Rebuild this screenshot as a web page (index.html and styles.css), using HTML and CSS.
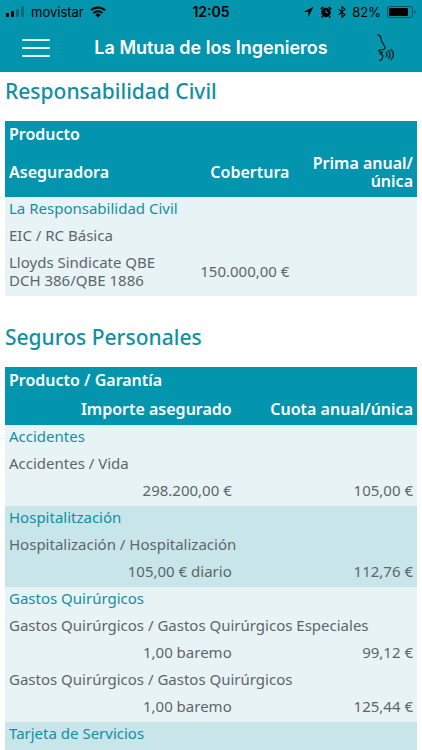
FILE: index.html
```html
<!DOCTYPE html>
<html lang="es">
<head>
<meta charset="utf-8">
<meta name="viewport" content="width=device-width, initial-scale=1">
<title>La Mutua de los Ingenieros</title>
<link rel="stylesheet" href="styles.css">
</head>
<body>
<header class="top">
  <div class="status">
    <div class="status-left">
      <svg width="19" height="12" viewBox="0 0 19 12"><rect x="0" y="7" width="3" height="4" rx="1"/><rect x="5" y="5" width="3" height="6" rx="1"/><rect x="10" y="3" width="3" height="8" rx="1" opacity=".3"/><rect x="15" y="0" width="3" height="11" rx="1" opacity=".3"/></svg>
      <span class="carrier">movistar</span>
      <svg class="wifi" width="16" height="12" viewBox="0 0 16 12"><g fill="none" stroke="#000" stroke-width="2"><path d="M1 4.3a10 10 0 0 1 14 0"/><path d="M3.5 7.1a6.4 6.4 0 0 1 9 0"/></g><path d="M5.4 8.9a3.7 3.7 0 0 1 5.2 0L8 11.6z"/></svg>
    </div>
    <time class="clock">12:05</time>
    <div class="status-right">
      <svg width="11" height="12" viewBox="0 0 11 12"><path d="M10.5.8.5 6h4.8v5.2z"/></svg>
      <svg width="12" height="12" viewBox="0 0 12 12"><circle cx="6" cy="6.5" r="4.7"/><path d="M.8 3.2 3.2 1M11.2 3.2 8.8 1M2.8 10.2l-1 1.2M9.2 10.2l1 1.2" stroke="#000" stroke-width="1.6"/><path d="M6 3.8v2.9h2.2" fill="none" stroke="#0395ad"/></svg>
      <svg class="bluetooth" width="8" height="12" viewBox="0 0 8 12"><path d="M.7 3.3 7 8.7 4 11.3V.7l3 2.6L.7 8.7" fill="none" stroke="#000" stroke-width="1.1"/></svg>
      <span class="percent">82%</span>
      <svg width="29" height="14" viewBox="0 0 29 14"><rect x=".5" y="1.5" width="25" height="11" rx="2.5" fill="none" stroke="#000" opacity=".45"/><rect x="2" y="3" width="19" height="8" rx="1"/><path d="M27 5q3 2 0 4z" opacity=".45"/></svg>
    </div>
  </div>
  <div class="nav">
    <button class="icon-button" type="button" aria-label="Menú"><svg width="28" height="20" viewBox="0 0 28 20"><path d="M1 2h26M1 10h26M1 18h26" stroke="#e4f6f8" stroke-width="2" stroke-linecap="round"/></svg></button>
    <h1 class="title">La Mutua de los Ingenieros</h1>
    <button class="icon-button" type="button" aria-label="Voz"><svg width="18" height="28" viewBox="0 0 18 28"><g fill="none" stroke="#10262b" stroke-width="1.4" stroke-linecap="round" stroke-linejoin="round"><path d="M1 1q3 .5 3 3.5 0 2 1.5 4.2l2.3 4q1 2.2-1.3 2.8l-3.5.2q-2 1.2-.3 2.3l2.8.5-2.3 1.4q1.8.6 2.6 1.8-.3 4.2-3 4.8"/><path d="M9.3 18.2q1.5 2.2 0 4.3M11.6 16.8q3 3.6 0 7.2M14 15.4q5 5 0 10"/></g></svg></button>
  </div>
</header>
<main class="content">
  <section class="group">
    <h2>Responsabilidad Civil</h2>
    <table>
      <colgroup><col class="liability-name"><col class="liability-cover"><col></colgroup>
      <thead>
        <tr><th colspan="3">Producto</th></tr>
        <tr class="columns"><th>Aseguradora</th><th class="amount">Cobertura</th><th class="amount">Prima anual/<br>única</th></tr>
      </thead>
      <tbody>
        <tr><th class="product" colspan="3">La Responsabilidad Civil</th></tr>
        <tr><td colspan="3">EIC / RC Básica</td></tr>
        <tr><td>Lloyds Sindicate QBE<br>DCH 386/QBE 1886</td><td class="amount">150.000,00 €</td><td></td></tr>
      </tbody>
    </table>
  </section>
  <section class="group">
    <h2>Seguros Personales</h2>
    <table>
      <colgroup><col class="insured"><col></colgroup>
      <thead>
        <tr><th colspan="2">Producto / Garantía</th></tr>
        <tr class="columns"><th class="amount">Importe asegurado</th><th class="amount">Cuota anual/única</th></tr>
      </thead>
      <tbody>
        <tr><th class="product" colspan="2">Accidentes</th></tr>
        <tr><td colspan="2">Accidentes / Vida</td></tr>
        <tr><td class="amount">298.200,00 €</td><td class="amount">105,00 €</td></tr>
      </tbody>
      <tbody>
        <tr><th class="product" colspan="2">Hospitalitzación</th></tr>
        <tr><td colspan="2">Hospitalización / Hospitalización</td></tr>
        <tr><td class="amount">105,00 € diario</td><td class="amount">112,76 €</td></tr>
      </tbody>
      <tbody>
        <tr><th class="product" colspan="2">Gastos Quirúrgicos</th></tr>
        <tr><td colspan="2">Gastos Quirúrgicos / Gastos Quirúrgicos Especiales</td></tr>
        <tr><td class="amount">1,00 baremo</td><td class="amount">99,12 €</td></tr>
        <tr><td colspan="2">Gastos Quirúrgicos / Gastos Quirúrgicos</td></tr>
        <tr><td class="amount">1,00 baremo</td><td class="amount">125,44 €</td></tr>
      </tbody>
      <tbody>
        <tr><th class="product" colspan="2">Tarjeta de Servicios</th></tr>
      </tbody>
    </table>
  </section>
</main>
</body>
</html>
```
FILE: styles.css
```css
* { box-sizing: border-box; }
body { margin: 0; background: #fff; color: #5d6669; font: 15px/18px "Noto Sans", "Open Sans", sans-serif; }
svg { display: block; flex: none; }
.top { background: #0395ad; font-family: Inter, sans-serif; }
.status { display: grid; grid-template-columns: 1fr auto 1fr; align-items: center; height: 24px; padding: 0 6px; color: #000; font-size: 13px; }
.status-left, .status-right { display: flex; align-items: center; gap: 5px; }
.status-left { gap: 6px; }
.status-right { justify-content: flex-end; gap: 6px; }
.clock { font-size: 14px; font-weight: 600; }
.nav { display: flex; align-items: center; justify-content: space-between; height: 48px; padding: 0 16px; }
.icon-button { display: flex; align-items: center; justify-content: center; width: 40px; height: 40px; padding: 0; border: 0; background: none; }
.title { margin: 0; color: #fff; font-size: 18px; line-height: 24px; font-weight: 600; }
.content { padding: 0 5px; }
.group { margin-bottom: 22px; }
.group:last-child { margin-bottom: 0; }
h2 { margin: 0; padding: 7px 0 18px; color: #128fa3; font-size: 21px; line-height: 24px; font-weight: 500; }
table { width: 100%; border-collapse: collapse; table-layout: fixed; }
.liability-name { width: 42%; }
.liability-cover { width: 28%; }
.insured { width: 56%; }
th, td { padding: 2px 4px 7px; text-align: left; font-weight: 400; }
thead { background: #0395ad; color: #fff; }
thead th { padding: 4px 4px 5px; font-size: 16px; font-weight: 600; }
.columns th { padding: 6px 4px 7px; }
tbody { background: #e8f3f6; }
tbody:nth-of-type(even) { background: #c8e5e9; }
.group:last-child tbody:last-child th { padding-bottom: 8px; }
.product { color: #128fa3; }
.amount { text-align: right; }
```
